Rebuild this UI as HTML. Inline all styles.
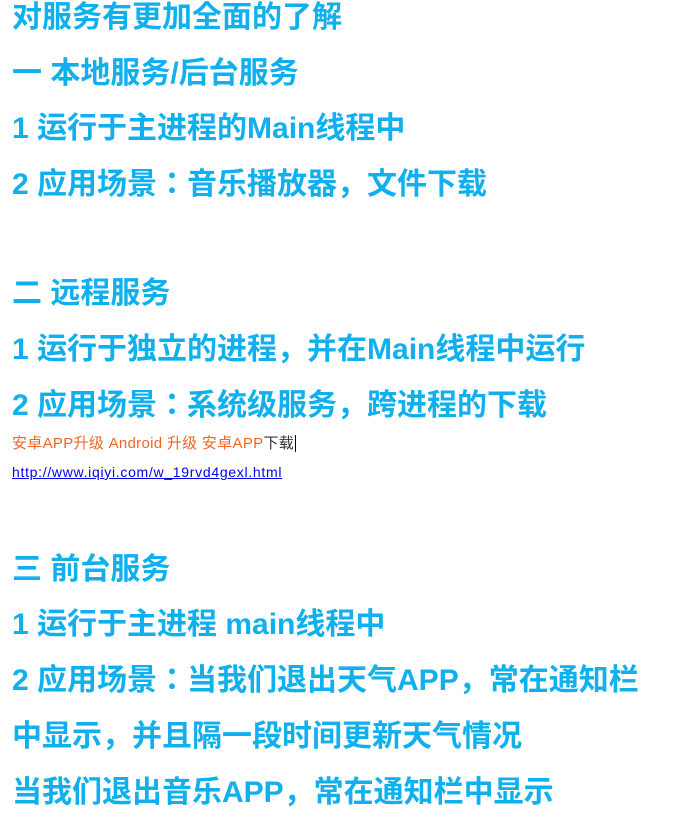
<!DOCTYPE html>
<html><head><meta charset="utf-8"><style>
html,body{margin:0;padding:0;background:#fff;width:690px;height:819px;overflow:hidden}
.l{position:absolute;left:12px;height:40px;line-height:40px;font-family:"Liberation Sans","Noto Sans CJK JP",sans-serif;font-weight:bold;font-size:30px;color:#0fb0ed;white-space:nowrap}
.s{position:absolute;left:12px;font-family:"Liberation Sans","Noto Sans CJK SC",sans-serif;white-space:nowrap}
</style></head><body>
<div class="l" style="top:-2px">对服务有更加全面的了解</div>
<div class="l" style="top:54px">一 本地服务/后台服务</div>
<div class="l" style="top:109px">1 运行于主进程的Main线程中</div>
<div class="l" style="top:165px">2 应用场景：音乐播放器，文件下载</div>
<div class="l" style="top:274px">二 远程服务</div>
<div class="l" style="top:330px">1 运行于独立的进程，并在Main线程中运行</div>
<div class="l" style="top:386px">2 应用场景：系统级服务，跨进程的下载</div>
<div class="s" style="top:435px;font-size:15px;line-height:18px;color:#f26522;letter-spacing:0.3px">安卓APP升级 Android 升级 安卓APP<span style="color:#333">下载</span><span style="border-left:1px solid #000;margin-left:1px"></span></div>
<div class="s" style="top:464px;font-size:14px;line-height:16px;color:#0000ee;text-decoration:underline;letter-spacing:0.7px">http://www.iqiyi.com/w_19rvd4gexl.html</div>
<div class="l" style="top:550px">三 前台服务</div>
<div class="l" style="top:605px">1 运行于主进程 main线程中</div>
<div class="l" style="top:661px">2 应用场景：当我们退出天气APP，常在通知栏</div>
<div class="l" style="top:717px">中显示，并且隔一段时间更新天气情况</div>
<div class="l" style="top:773px">当我们退出音乐APP，常在通知栏中显示</div>
</body></html>
